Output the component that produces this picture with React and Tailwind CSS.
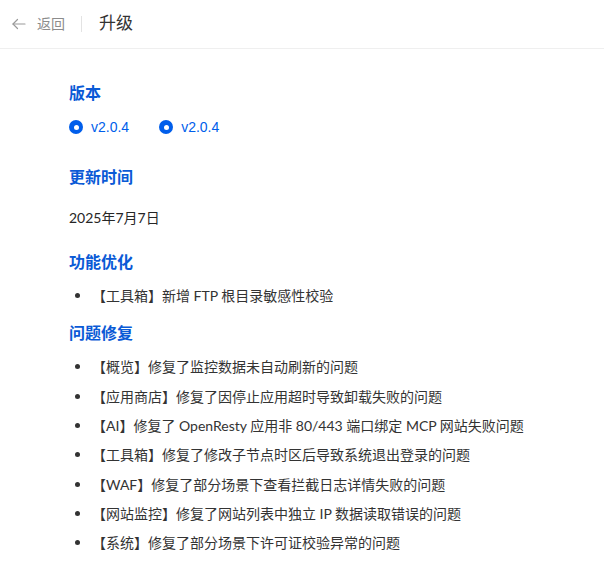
import React from "react";

const FONT = { fontFamily: '"Liberation Sans", "Noto Sans CJK SC", sans-serif' };
const LIST_FONT = { fontFamily: 'Lato, "Noto Sans CJK SC", sans-serif' };

function Radio({ label }) {
  return (
    <div className="flex items-center">
      <span className="w-[14px] h-[14px] rounded-full bg-[#005eeb] flex items-center justify-center">
        <span className="w-[5px] h-[5px] rounded-full bg-white" />
      </span>
      <span className="ml-[8px] text-[14px] leading-[22px] text-[#005eeb]">{label}</span>
    </div>
  );
}

function Heading({ children, className = "" }) {
  return (
    <h2 className={"text-[16px] leading-[24px] font-bold text-[#0a5ad6] " + className}>{children}</h2>
  );
}

function Item({ children }) {
  return (
    <li className="flex items-center h-[29.3px] text-[14px] text-[#333333]" style={LIST_FONT}>
      <span className="w-[5px] h-[5px] rounded-full bg-[#333333] ml-[6px] mr-[12px] shrink-0" />
      <span className="whitespace-nowrap">{children}</span>
    </li>
  );
}

export default function App() {
  const fixes = [
    "【概览】修复了监控数据未自动刷新的问题",
    "【应用商店】修复了因停止应用超时导致卸载失败的问题",
    "【AI】修复了 OpenResty 应用非 80/443 端口绑定 MCP 网站失败问题",
    "【工具箱】修复了修改子节点时区后导致系统退出登录的问题",
    "【WAF】修复了部分场景下查看拦截日志详情失败的问题",
    "【网站监控】修复了网站列表中独立 IP 数据读取错误的问题",
    "【系统】修复了部分场景下许可证校验异常的问题",
  ];
  return (
    <div className="w-[604px] h-[574px] bg-white overflow-hidden" style={FONT}>
      <header className="h-[49px] border-b border-[#efefef] flex items-center">
        <svg width="16" height="16" viewBox="0 0 16 16" className="ml-[11px]" fill="none" stroke="#9a9a9a" strokeWidth="1.2" strokeLinecap="round" strokeLinejoin="round">
          <path d="M14 8H2" />
          <path d="M6.5 3.5L2 8l4.5 4.5" />
        </svg>
        <span className="ml-[10px] text-[14px] text-[#8c8c8c] leading-[22px]">返回</span>
        <span className="ml-[16px] w-px h-[16px] bg-[#e3e3e3]" />
        <span className="ml-[17px] text-[17px] text-[#333333] leading-[24px]">升级</span>
      </header>
      <main className="pl-[69px] pt-[33px]">
        <Heading>版本</Heading>
        <div className="flex items-center gap-[30px] mt-[10px]">
          <Radio label="v2.0.4" />
          <Radio label="v2.0.4" />
        </div>
        <Heading className="mt-[28px]">更新时间</Heading>
        <p className="mt-[17px] text-[14px] leading-[22px] text-[#262626]" style={LIST_FONT}>2025年7月7日</p>
        <Heading className="mt-[22px]">功能优化</Heading>
        <ul className="mt-[6px]">
          <Item>【工具箱】新增 FTP 根目录敏感性校验</Item>
        </ul>
        <Heading className="mt-[12px]">问题修复</Heading>
        <ul className="mt-[6px]">
          {fixes.map((f, i) => (
            <Item key={i}>{f}</Item>
          ))}
        </ul>
      </main>
    </div>
  );
}
